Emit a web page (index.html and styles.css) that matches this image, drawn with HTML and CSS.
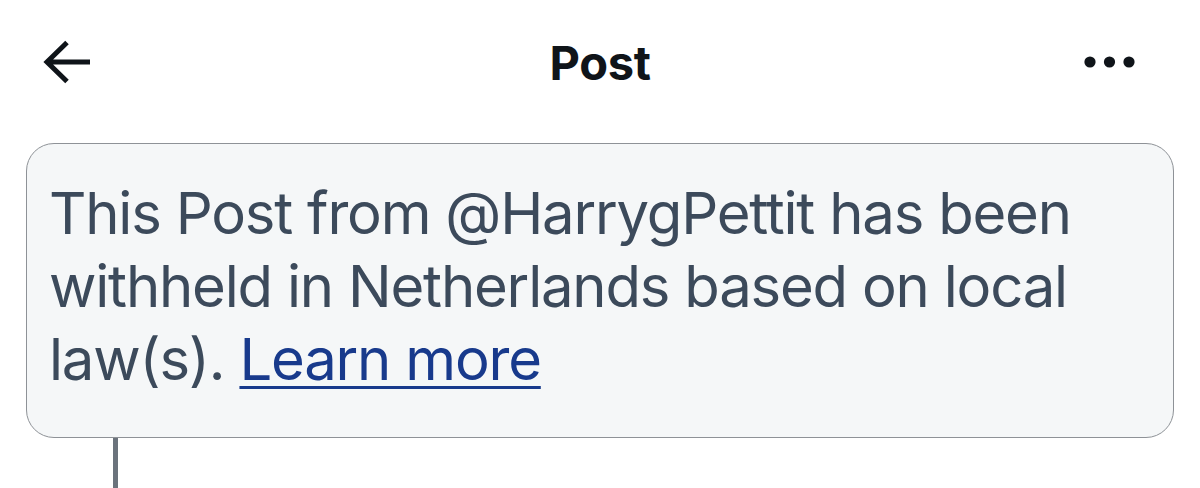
FILE: index.html
```html
<!DOCTYPE html>
<html lang="en">
<head>
<meta charset="utf-8">
<title>Post</title>
<link rel="stylesheet" href="styles.css">
</head>
<body>
<div class="page">
  <header class="topbar">
    <button class="icon-btn back" aria-label="Back">
      <svg width="50" height="44" viewBox="0 0 50 44"><path d="M48 22H5M25 2.5L5 22l20 19.5" fill="none" stroke="#0f1419" stroke-width="5"/></svg>
    </button>
    <h1 class="title">Post</h1>
    <button class="icon-btn more" aria-label="More">
      <svg width="52" height="14" viewBox="0 0 52 14"><circle cx="6" cy="7" r="5.6" fill="#0f1419"/><circle cx="25.5" cy="7" r="5.6" fill="#0f1419"/><circle cx="45" cy="7" r="5.6" fill="#0f1419"/></svg>
    </button>
  </header>
  <section class="notice">
    <p class="notice-text">This Post from @HarrygPettit has been withheld in Netherlands based on local law(s). <a class="notice-link" href="#">Learn more</a></p>
  </section>
  <div class="thread-line"></div>
</div>
</body>
</html>
```
FILE: styles.css
```css
html, body {
  margin: 0;
  padding: 0;
  background: #ffffff;
}
body {
  font-family: Inter, "Noto Sans", "Liberation Sans", sans-serif;
  width: 1200px;
  height: 488px;
  overflow: hidden;
}
.page {
  display: flex;
  flex-direction: column;
}
.topbar {
  height: 124px;
  display: flex;
  align-items: center;
  justify-content: space-between;
  padding: 0 64px 0 42px;
  box-sizing: border-box;
}
.icon-btn {
  background: none;
  border: 0;
  padding: 0;
  display: flex;
  align-items: center;
}
.back {
  width: 142px;
}
.more {
  width: 120px;
  justify-content: flex-end;
}
.title {
  margin: 0;
  font-size: 47px;
  font-weight: 700;
  color: #0f1419;
  letter-spacing: -0.3px;
}
.notice {
  margin: 19px 26px 0 26px;
  height: 295px;
  box-sizing: border-box;
  background: #f5f7f8;
  border: 1.5px solid #8e9297;
  border-radius: 28px;
  padding: 33px 20px 0 22px;
}
.notice-text {
  margin: 0;
  font-size: 58px;
  line-height: 73px;
  color: #3c4a5b;
  letter-spacing: -1.2px;
}
.notice-link {
  color: #183a8c;
  text-decoration: underline;
  text-decoration-thickness: 3px;
  text-underline-offset: 6px;
}
.thread-line {
  width: 5px;
  height: 50px;
  margin-left: 113px;
  background: #6b737c;
}
```
